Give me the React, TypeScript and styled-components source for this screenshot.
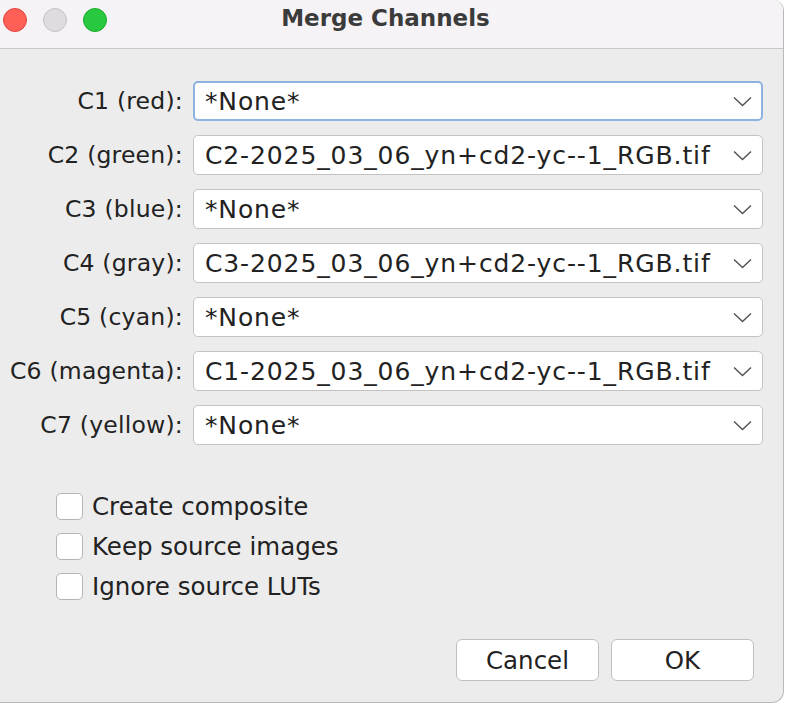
import React from "react";
import styled, { createGlobalStyle } from "styled-components";

const Global = createGlobalStyle`
  html, body { margin: 0; padding: 0; background: #ffffff; }
  body { font-family: "DejaVu Sans", "Noto Sans", sans-serif; }
  * { box-sizing: border-box; }
`;

const Window = styled.div`
  width: 784px;
  height: 703px;
  background: #ececec;
  border-radius: 0 10px 12px 0;
  border-right: 1px solid #b9b9b9;
  border-bottom: 1px solid #b9b9b9;
  overflow: hidden;
  display: flex;
  flex-direction: column;
`;

const TitleBar = styled.div`
  height: 49px;
  flex: none;
  background: #f6f3f6;
  border-bottom: 1px solid #c9c8c9;
  display: flex;
  align-items: center;
  position: relative;
  padding-left: 3px;
  gap: 16px;
`;

const Light = styled.span<{ $c: string; $b: string }>`
  width: 24px;
  height: 24px;
  border-radius: 50%;
  background: ${(p) => p.$c};
  border: 1px solid ${(p) => p.$b};
  margin-top: -8px;
`;

const Title = styled.div`
  position: absolute;
  left: 0;
  right: 12px;
  top: 5px;
  text-align: center;
  font-family: "DejaVu Sans", sans-serif;
  font-weight: bold;
  font-size: 23px;
  color: #3b3b3b;
  pointer-events: none;
`;

const Body = styled.div`
  flex: 1;
  display: flex;
  flex-direction: column;
  padding: 32px 20px 0 10px;
`;

const Form = styled.div`
  display: grid;
  grid-template-columns: auto 1fr;
  column-gap: 10px;
  row-gap: 14px;
  align-items: center;
`;

const Label = styled.div`
  text-align: right;
  font-size: 23.5px;
  letter-spacing: 0.2px;
  color: #222;
  white-space: nowrap;
`;

const Select = styled.div<{ $focused?: boolean }>`
  height: 40px;
  background: #fff;
  border-radius: 5px;
  border: ${(p) => (p.$focused ? "2px solid #8db3e2" : "1px solid #c3c3c3")};
  display: flex;
  align-items: center;
  padding: 0 ${(p) => (p.$focused ? "9px" : "10px")} 0 ${(p) => (p.$focused ? "10px" : "11px")};
  font-size: 25px;
  letter-spacing: 0.9px;
  color: #222;
`;

const SelectText = styled.span`
  flex: 1;
  white-space: nowrap;
  overflow: hidden;
`;

const Checks = styled.div`
  display: flex;
  flex-direction: column;
  gap: 12px;
  margin-top: 47px;
  padding-left: 46px;
`;

const CheckRow = styled.label`
  display: flex;
  align-items: center;
  gap: 9px;
  font-size: 24.5px;
  color: #222;
  height: 28px;
`;

const Box = styled.span`
  width: 27px;
  height: 27px;
  background: #fff;
  border: 1px solid #b5b5b5;
  border-radius: 5px;
`;

const Buttons = styled.div`
  display: flex;
  justify-content: flex-end;
  gap: 12px;
  margin-top: 39px;
  padding-right: 9px;
`;

const Button = styled.button`
  width: 143px;
  height: 42px;
  background: #fff;
  border: 1px solid #c0c0c0;
  border-radius: 6px;
  font-family: "DejaVu Sans", sans-serif;
  font-size: 24.5px;
  color: #222;
  padding: 0;
`;

const Chevron = () => (
  <svg width="19" height="11" viewBox="0 0 19 11">
    <path d="M1 1.5 L9.5 9.5 L18 1.5" fill="none" stroke="#555" strokeWidth="1.5" />
  </svg>
);

const rows: [string, string][] = [
  ["C1 (red):", "*None*"],
  ["C2 (green):", "C2-2025_03_06_yn+cd2-yc--1_RGB.tif"],
  ["C3 (blue):", "*None*"],
  ["C4 (gray):", "C3-2025_03_06_yn+cd2-yc--1_RGB.tif"],
  ["C5 (cyan):", "*None*"],
  ["C6 (magenta):", "C1-2025_03_06_yn+cd2-yc--1_RGB.tif"],
  ["C7 (yellow):", "*None*"],
];

export default function App() {
  return (
    <>
      <Global />
      <Window>
        <TitleBar>
          <Light $c="#fe5f57" $b="#e0443e" />
          <Light $c="#dfdcdf" $b="#c6c3c6" />
          <Light $c="#28c840" $b="#1aab29" />
          <Title>Merge Channels</Title>
        </TitleBar>
        <Body>
          <Form>
            {rows.map(([l, v], i) => (
              <React.Fragment key={l}>
                <Label>{l}</Label>
                <Select $focused={i === 0}>
                  <SelectText>{v}</SelectText>
                  <Chevron />
                </Select>
              </React.Fragment>
            ))}
          </Form>
          <Checks>
            {["Create composite", "Keep source images", "Ignore source LUTs"].map((t) => (
              <CheckRow key={t}>
                <Box />
                {t}
              </CheckRow>
            ))}
          </Checks>
          <Buttons>
            <Button>Cancel</Button>
            <Button>OK</Button>
          </Buttons>
        </Body>
      </Window>
    </>
  );
}
